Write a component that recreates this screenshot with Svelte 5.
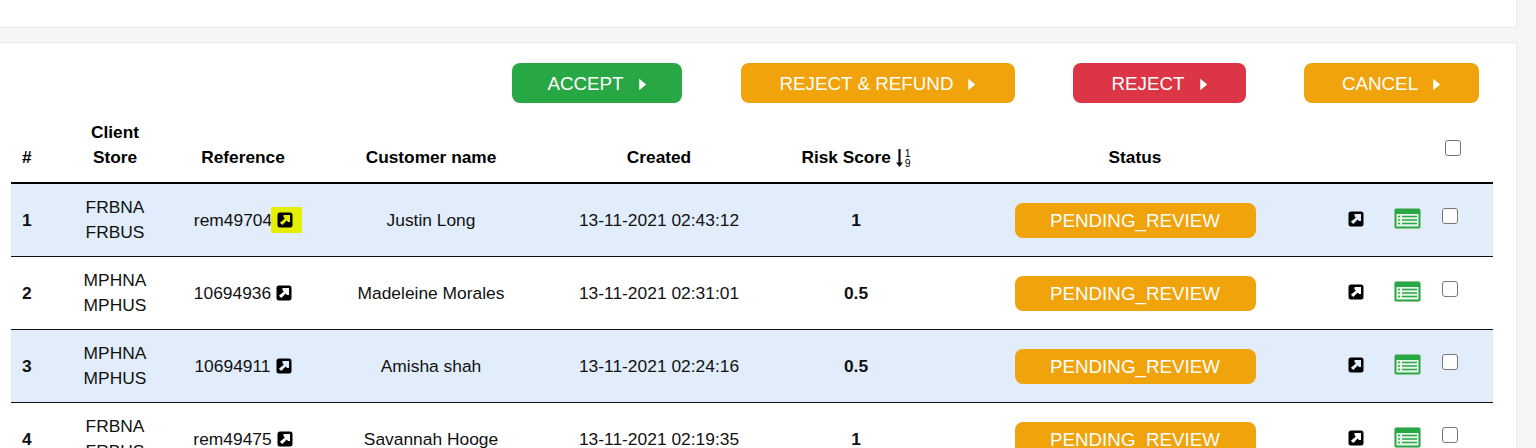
<script>
  const actions = [
    { label: 'ACCEPT', tone: 'green', width: 170 },
    { label: 'REJECT & REFUND', tone: 'orange', width: 274 },
    { label: 'REJECT', tone: 'red', width: 173 },
    { label: 'CANCEL', tone: 'orange', width: 175 }
  ];

  const rows = [
    { id: 1, client: 'FRBNA', store: 'FRBUS', ref: 'rem49704', name: 'Justin Long', created: '13-11-2021 02:43:12', risk: '1', marked: true },
    { id: 2, client: 'MPHNA', store: 'MPHUS', ref: '10694936', name: 'Madeleine Morales', created: '13-11-2021 02:31:01', risk: '0.5' },
    { id: 3, client: 'MPHNA', store: 'MPHUS', ref: '10694911', name: 'Amisha shah', created: '13-11-2021 02:24:16', risk: '0.5' },
    { id: 4, client: 'FRBNA', store: 'FRBUS', ref: 'rem49475', name: 'Savannah Hooge', created: '13-11-2021 02:19:35', risk: '1' }
  ];
</script>

{#snippet linkIcon()}
  <svg class="link-icon" width="16" height="16" viewBox="0 0 16 16">
    <path
      fill-rule="evenodd"
      d="M3 .5h10A2.5 2.5 0 0 1 15.500 3v10a2.500 2.500 0 0 1-2.500 2.500H3A2.500 2.500 0 0 1 .5 13V3A2.500 2.500 0 0 1 3 .5zM6.500 3v2.200l1.400 1.200-5 4.300 2.400 2.400 4.400-4.600 1.300 1.500H13V3z"
      fill="#000"
    />
  </svg>
{/snippet}

<div class="page">
  <div class="top-card"></div>

  <div class="card">
    <div class="actions">
      {#each actions as action}
        <button class="action {action.tone}" style="width: {action.width}px">
          <span class="action-label">{action.label}</span>
          <svg class="caret" width="9" height="13" viewBox="0 0 8 12"><path d="M1 .8 7.400 6 1 11.200z" fill="#fff" /></svg>
        </button>
      {/each}
    </div>

    <table>
      <colgroup>
        <col class="c-num" />
        <col class="c-client" />
        <col class="c-ref" />
        <col class="c-name" />
        <col class="c-created" />
        <col class="c-risk" />
        <col class="c-status" />
        <col class="c-link" />
        <col class="c-sheet" />
        <col class="c-check" />
        <col />
      </colgroup>
      <thead>
        <tr>
          <th class="num">#</th>
          <th>Client<br />Store</th>
          <th>Reference</th>
          <th>Customer name</th>
          <th>Created</th>
          <th>
            <span class="sort">
              Risk Score
              <svg width="7" height="18" viewBox="0 0 7 18"><path d="M2.400 0h2.200v13.500H7L3.500 18 0 13.500h2.400z" fill="#111" /></svg>
              <span class="digits"><span>1</span><span>9</span></span>
            </span>
          </th>
          <th>Status</th>
          <th></th>
          <th></th>
          <th class="head-check"><input type="checkbox" /></th>
          <th></th>
        </tr>
      </thead>
      <tbody>
        {#each rows as row}
          <tr>
            <td class="num">{row.id}</td>
            <td>{row.client}<br />{row.store}</td>
            <td>
              <span class="ref">
                {row.ref}
                {#if row.marked}
                  <span class="marked">{@render linkIcon()}</span>
                {:else}
                  {@render linkIcon()}
                {/if}
              </span>
            </td>
            <td>{row.name}</td>
            <td>{row.created}</td>
            <td class="risk">{row.risk}</td>
            <td><span class="pill">PENDING_REVIEW</span></td>
            <td class="row-link">{@render linkIcon()}</td>
            <td>
              <svg class="sheet" width="27" height="21" viewBox="0 0 27 21">
                <rect x=".5" y=".5" width="26" height="20" rx="2" fill="#28a745" stroke="#8fc79b" stroke-width="1" />
                <rect x="2.500" y="6" width="22" height="12.500" fill="#e8f5ea" />
                <path d="M4 8.500h2M8 8.500h15M4 12h2M8 12h15M4 15.500h2M8 15.500h15" stroke="#28a745" stroke-width="1.600" />
              </svg>
            </td>
            <td class="row-check"><input type="checkbox" /></td>
            <td></td>
          </tr>
        {/each}
      </tbody>
    </table>
  </div>
</div>

<style>
  :global(html),
  :global(body) {
    margin: 0;
    height: 448px;
    overflow: hidden;
    background: #f6f6f6;
  }

  .page {
    width: 1517px;
    font-family: 'Liberation Sans', Arial, sans-serif;
    color: #111;
  }

  .top-card {
    height: 27px;
    background: #fff;
    border-right: 1px solid #e9e9e9;
    border-bottom: 1px solid #e9e9e9;
  }

  .card {
    margin-top: 14px;
    background: #fff;
    border-top: 1px solid #e9e9e9;
    border-right: 1px solid #e9e9e9;
    padding: 20px 0 0 11px;
  }

  .actions {
    display: flex;
    justify-content: flex-end;
    gap: 58px;
    padding-right: 37px;
    margin-bottom: 17px;
  }

  .action {
    height: 40px;
    border: none;
    border-radius: 8px;
    color: #fff;
    font: 18.800px 'Liberation Sans', Arial, sans-serif;
    display: flex;
    align-items: center;
    justify-content: center;
    gap: 14px;
    padding: 2px 0 0;
  }

  .action:first-child {
    margin-right: 1px;
  }

  .green {
    background: #28a745;
  }

  .orange {
    background: #f0a30a;
  }

  .red {
    background: #dc3545;
  }

  table {
    width: 1482px;
    table-layout: fixed;
    border-collapse: collapse;
    font-size: 17.400px;
    line-height: 25px;
  }

  .c-num { width: 49px; }
  .c-client { width: 110px; }
  .c-ref { width: 146px; }
  .c-name { width: 230px; }
  .c-created { width: 226px; }
  .c-risk { width: 168px; }
  .c-status { width: 390px; }
  .c-link { width: 52px; }
  .c-sheet { width: 50px; }
  .c-check { width: 38px; }

  th {
    font-size: 17.300px;
    font-weight: 700;
    text-align: center;
    vertical-align: bottom;
    padding: 0 0 12px;
    border-bottom: 2px solid #000;
    color: #000;
  }

  td {
    height: 72px;
    padding: 0;
    text-align: center;
    vertical-align: middle;
    border-bottom: 1px solid #111;
  }

  tbody tr:nth-child(odd) td {
    background: #e1edfb;
  }

  th.num,
  td.num {
    text-align: left;
    padding-left: 11px;
    font-weight: 700;
  }

  .risk {
    font-weight: 700;
  }

  .ref {
    display: inline-flex;
    align-items: center;
    gap: 5px;
  }

  .marked {
    display: inline-flex;
    align-items: center;
    width: 31px;
    height: 26px;
    margin: 0 -10px 0 -6px;
    padding-left: 6px;
    box-sizing: border-box;
    background: #e4f000;
  }

  .link-icon {
    display: inline-block;
    vertical-align: middle;
  }

  .row-link .link-icon {
    margin-bottom: 3px;
  }

  .sheet {
    display: inline-block;
    vertical-align: middle;
    margin-bottom: 4px;
  }

  .sort {
    display: inline-flex;
    align-items: center;
    gap: 5px;
  }

  .digits {
    display: inline-flex;
    flex-direction: column;
    font-size: 10.500px;
    font-weight: 400;
    line-height: 10px;
    margin-left: -3px;
  }

  .pill {
    display: inline-block;
    width: 241px;
    height: 35px;
    line-height: 35px;
    border-radius: 8px;
    background: #f0a30a;
    color: #fff;
    font-size: 18.800px;
  }

  input[type='checkbox'] {
    width: 16px;
    height: 16px;
    margin: 0;
    appearance: none;
    background: #fff;
    border: 1.500px solid #767676;
    border-radius: 3px;
    box-sizing: border-box;
    display: inline-block;
  }

  .head-check {
    padding-bottom: 19px;
  }

  .head-check input {
    position: relative;
    left: 2px;
  }

  .row-check input {
    margin: 0 2px 2px 0;
  }
</style>
